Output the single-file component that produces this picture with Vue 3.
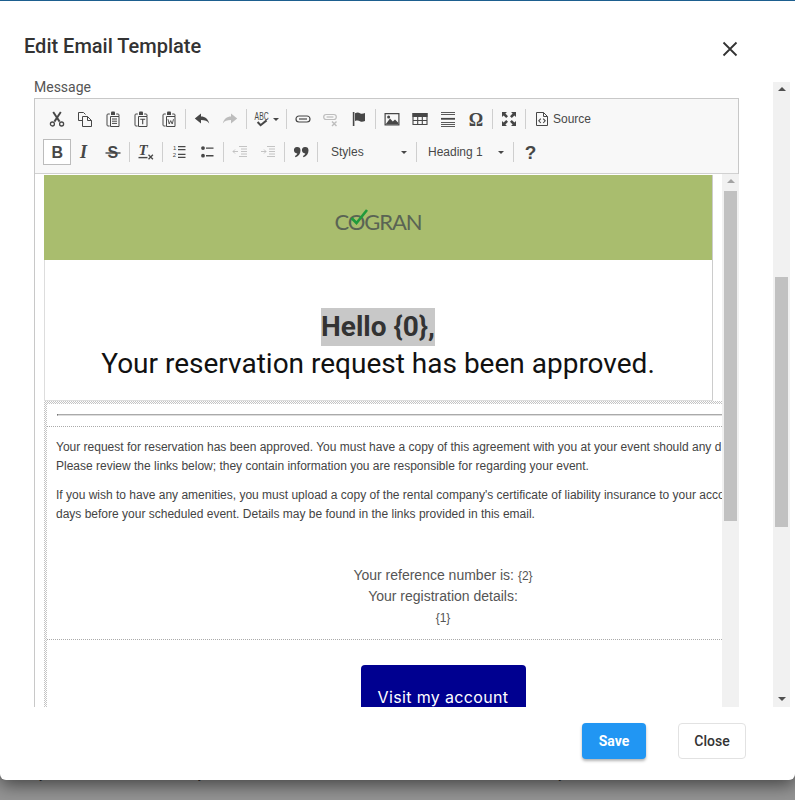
<script setup>
const F = (d) => ({ d, fill: 'currentColor', stroke: 'none', w: 0 })
const S = (d, w = 1) => ({ d, fill: 'none', stroke: 'currentColor', w })
const T = (t, x, y, size, opts = {}) => ({ t, x, y, size, ...opts })
const clip = S('M4.8 3H3a1 1 0 0 0-1 1v10a1 1 0 0 0 1 1h1.6M11.2 3H13a1 1 0 0 1 1 1v1.4', 1)
const clipTop = F('M6 1.4a1 1 0 0 1 1-1h2a1 1 0 0 1 1 1V4H6z')
const docBox = S('M5.5 5.5h8.5v10H5.5z', 1)

const row1 = [
  { k: 'cut', p: [S('M4.2 1 10.6 10.6', 1.9), S('M11.8 1 5.4 10.6', 1.9), S('M5.4 13a2 2 0 1 1-4 0 2 2 0 0 1 4 0zM14.6 13a2 2 0 1 1-4 0 2 2 0 0 1 4 0z', 1.3)] },
  { k: 'copy', p: [S('M5.5 9.5H1.5v-8h5l2 2', 1), S('M5.5 5.5h5l4 4v6h-9z', 1), S('M10.5 5.5v4h4', 1)] },
  { k: 'paste', p: [clip, clipTop, docBox, S('M7 8h5M7 10.2h5M7 12.4h5', 1)] },
  { k: 'pastetext', p: [clip, clipTop, docBox, S('M7.2 8.2h5M9.7 8.2v5', 1.1)] },
  { k: 'pasteword', p: [clip, clipTop, docBox, S('M7 8.2 8.2 13 9.7 9.6 11.2 13 12.5 8.2', 0.9)] },
  { sep: true },
  { k: 'undo', p: [F('M.8 7.6 7 2.6v3c4.2 0 7 2.6 8.2 6.8C13.4 9.8 11 9 7 9v3.4z')] },
  { k: 'redo', off: true, p: [F('M15.2 7.6 9 2.6v3C4.8 5.6 2 8.2.8 12.4 2.6 9.8 5 9 9 9v3.4z')] },
  { sep: true },
  { k: 'spell', wide: 35, caret: true, p: [T('ABC', 0.6, 8.6, 10, { family: 'Liberation Sans', len: 14 }), S('M3.6 11 6.6 14.2 12.6 9.4', 2)] },
  { sep: true },
  { k: 'link', p: [S('M6 5H4a3 3 0 0 0 0 6h8a3 3 0 0 0 0-6H5.6', 1.2), S('M4 8h8', 1.2)] },
  { k: 'unlink', off: true, p: [S('M5 3.5H3.2a2.5 2.5 0 0 0 0 5h7.6a2.5 2.5 0 0 0 0-5H5', 1.2), S('M3.6 6h6.8', 1.2), S('M9 10.5l4.5 4.5M13.5 10.5 9 15', 1.4)] },
  { k: 'flag', p: [F('M1.8 1h1.6v14H1.8z'), F('M4 2.2c2-.8 3.6-.8 5 0s3 .6 5-.2v8c-2 .8-3.6 1-5 .2s-3-.9-5-.2z')] },
  { sep: true },
  { k: 'image', p: [F('M.5 2h15v12.4H.5zM1.7 3.2v10h12.6v-10z'), F('M1.7 13.2 6 7.4l2.8 3 2.2-2 3.3 3.4v1.4z'), F('M4.6 4.4a1.5 1.5 0 1 1 0 3 1.5 1.5 0 0 1 0-3z')] },
  { k: 'table', p: [F('M.5 2h15v4H.5z'), S('M1 2.5h14v11H1zM1 9.5h14M5.7 5v8.5M10.3 5v8.5', 1.1)] },
  { k: 'hr', p: [S('M1 1.5h14M1 3.5h14', 0.9), S('M1 7.8h14', 1.8), S('M1 11.5h14M1 13.5h14M1 15.5h14', 0.9)] },
  { k: 'omega', p: [T('Ω', 0.8, 14.6, 18, { family: 'Liberation Serif', weight: 700 })] },
  { sep: true },
  { k: 'max', p: [F('M1 1h5L4.4 2.6 7 5.2 5.2 7 2.6 4.4 1 6zM15 1v5l-1.6-1.6L10.8 7 9 5.2l2.6-2.6L10 1zM1 15v-5l1.6 1.6L5.2 9 7 10.8l-2.6 2.6L6 15zM15 15h-5l1.6-1.6L9 10.8 10.8 9l2.6 2.6L15 10z')] },
  { sep: true },
  { k: 'source', wide: 69, label: 'Source', p: [S('M2.5 1.5h7l4 4v9h-11z', 1), S('M9.5 1.5v4h4', 1), S('M6.8 7.6 4.8 9.8l2 2.2M9.2 7.6l2 2.2-2 2.2', 1.1)] }
]

const row2 = [
  { k: 'bold', on: true, p: [T('B', 2.4, 14, 16, { family: 'Liberation Sans', weight: 700 })] },
  { k: 'italic', p: [T('I', 3, 14, 18, { family: 'Liberation Serif', weight: 700, style: 'italic' })] },
  { k: 'strike', p: [T('S', 2.6, 14, 16, { family: 'Liberation Sans', weight: 700 }), S('M0.5 9h15', 1.4)] },
  { sep: true },
  { k: 'clear', p: [T('T', 0.4, 11.4, 15, { family: 'Liberation Serif', weight: 700, style: 'italic' }), S('M0.5 13.6h9', 1.4), S('M10.5 10.8l4.4 4.4M14.9 10.8l-4.4 4.4', 1.3)] },
  { sep: true },
  { k: 'ol', p: [T('1', 2, 6.4, 6, { family: 'Liberation Sans' }), T('2', 1.8, 13.4, 6, { family: 'Liberation Sans' }), S('M7 2.6h7.5M7 5.6h7.5M7 10.4h7.5M7 13.4h7.5', 1.1)] },
  { k: 'ul', p: [F('M4 2.2a1.9 1.9 0 1 1 0 3.8 1.9 1.9 0 0 1 0-3.8zM4 9.8a1.9 1.9 0 1 1 0 3.8 1.9 1.9 0 0 1 0-3.8z'), S('M7 4.1h7.5M7 11.7h7.5', 1.4)] },
  { sep: true },
  { k: 'outdent', off: true, p: [S('M7 2.5h8M9 5h6M9 7.5h6M9 10h6M7 12.5h8', 0.9), S('M1 7.5h5M3 5.5l-2 2 2 2', 0.9)] },
  { k: 'indent', off: true, p: [S('M7 2.5h8M9 5h6M9 7.5h6M9 10h6M7 12.5h8', 0.9), S('M1 7.5h5M4 5.5l2 2-2 2', 0.9)] },
  { sep: true },
  { k: 'quote', p: [F('M4 3a3.4 3.4 0 0 1 3.5 3.4c0 3.4-2 5.8-5 6.9l-.6-1.3c1.4-.8 2.2-1.8 2.4-2.6A3.1 3.1 0 0 1 4 3zM12 3a3.4 3.4 0 0 1 3.5 3.4c0 3.4-2 5.8-5 6.9l-.6-1.3c1.4-.8 2.2-1.8 2.4-2.6A3.1 3.1 0 0 1 12 3z')] },
  { sep: true },
  { k: 'styles', combo: 'Styles', wide: 94, pad: 11 },
  { sep: true },
  { k: 'heading', combo: 'Heading 1', wide: 92, pad: 9 },
  { sep: true },
  { k: 'help', p: [T('?', 2.8, 14.8, 19, { family: 'Liberation Sans', weight: 700 })] }
]
const rows = [row1, row2]
</script>

<template>
  <div class="page">
    <div class="modal">
      <header class="head">
        <h2 class="title">Edit Email Template</h2>
        <svg class="close-x" width="16" height="16" viewBox="0 0 16 16" aria-hidden="true">
          <path d="M1.5 1.5 14.5 14.5M14.5 1.5 1.5 14.5" stroke="#333" stroke-width="1.8" fill="none" />
        </svg>
      </header>

      <div class="body">
        <div class="form">
          <div class="label">Message</div>
          <div class="editor">
            <div class="toolbar">
              <div v-for="(row, r) in rows" :key="r" class="tb-row">
                <template v-for="(b, i) in row" :key="i">
                  <span v-if="b.sep" class="sep"></span>
                  <span v-else-if="b.combo" class="combo" :style="{ width: b.wide + 'px', paddingLeft: b.pad + 'px' }">
                    <span>{{ b.combo }}</span><i class="caret"></i>
                  </span>
                  <span
                    v-else
                    class="btn"
                    :class="{ on: b.on, off: b.off }"
                    :style="b.wide ? { width: b.wide + 'px' } : null"
                  >
                    <svg width="16" height="16" viewBox="0 0 16 16" class="ico" aria-hidden="true">
                      <template v-for="(p, j) in b.p" :key="j">
                        <text
                          v-if="p.t"
                          :x="p.x"
                          :y="p.y"
                          :font-size="p.size"
                          :font-family="p.family"
                          :font-weight="p.weight || 400"
                          :font-style="p.style || 'normal'"
                          :textLength="p.len"
                          :lengthAdjust="p.len ? 'spacingAndGlyphs' : undefined"
                          fill="currentColor"
                        >{{ p.t }}</text>
                        <path v-else :d="p.d" :fill="p.fill" :stroke="p.stroke" :stroke-width="p.w" />
                      </template>
                    </svg>
                    <i v-if="b.caret" class="caret small"></i>
                    <span v-if="b.label" class="btn-label">{{ b.label }}</span>
                  </span>
                </template>
              </div>
            </div>

            <div class="viewport">
              <div class="frame">
                <div class="hero-table">
                  <div class="hero-band">
                    <div class="logo">
                      <span class="logo-text">COGRAN</span>
                      <svg class="logo-check" width="20" height="18" viewBox="0 0 20 18" aria-hidden="true">
                        <path d="M2.5 10 7.5 15 18 2" stroke="#1f9a3c" stroke-width="2.6" fill="none" />
                      </svg>
                    </div>
                  </div>
                  <div class="hero-text">
                    <h1 class="hero-h">
                      <span class="sel">Hello {0},</span><br />
                      <span class="hero-sub">Your reservation request has been approved.</span>
                    </h1>
                  </div>
                </div>

                <div class="sections">
                  <div class="sections-in">
                    <div class="rule-cell"><div class="rule"></div></div>
                    <div class="copy-cell">
                      <p>Your request for reservation has been approved. You must have a copy of this agreement with you at your event should any d<br />Please review the links below; they contain information you are responsible for regarding your event.</p>
                      <p>If you wish to have any amenities, you must upload a copy of the rental company's certificate of liability insurance to your account<br />days before your scheduled event. Details may be found in the links provided in this email.</p>
                      <div class="details">
                        <div class="d1">Your reference number is: <small>{2}</small></div>
                        <div class="d2">Your registration details:</div>
                        <div class="d3">{1}</div>
                      </div>
                    </div>
                    <div class="cta-cell">
                      <div class="cta">Visit my account</div>
                    </div>
                  </div>
                </div>
              </div>
              <div class="sb inner">
                <i class="arrow up"></i>
                <div class="thumb"></div>
              </div>
            </div>
          </div>
        </div>

        <div class="sb outer">
          <i class="arrow up"></i>
          <div class="thumb"></div>
          <i class="arrow down"></i>
        </div>
      </div>

      <footer class="foot">
        <button class="b-save">Save</button>
        <button class="b-close">Close</button>
      </footer>
    </div>

    <div class="under">
      <span class="y1">y</span>
      <span class="y2">y</span>
      <span class="y3">y</span>
    </div>
  </div>
</template>

<style>
html, body { margin: 0; overflow: hidden; }
</style>

<style scoped>
.page {
  width: 795px;
  height: 800px;
  overflow: hidden;
  background: #949494;
  font-family: Roboto, "Liberation Sans", sans-serif;
  position: relative;
}
.modal {
  width: 795px;
  height: 780px;
  box-sizing: border-box;
  background: #fff;
  border-top: 1px solid #1d5f8f;
  border-radius: 0 0 6px 6px;
  box-shadow: 0 5px 18px rgba(0, 0, 0, 0.55);
  display: flex;
  flex-direction: column;
  position: relative;
  z-index: 1;
}
.head {
  height: 79px;
  flex: none;
  display: flex;
  justify-content: space-between;
  padding: 31px 57px 0 24px;
  box-sizing: border-box;
}
.title {
  margin: 0;
  font-size: 20px;
  font-weight: 500;
  line-height: 28px;
  color: #333;
}
.close-x { margin-top: 9px; }
.body {
  height: 627px;
  flex: none;
  display: flex;
  overflow: hidden;
}
.form {
  width: 773px;
  flex: none;
  box-sizing: border-box;
  padding-left: 34px;
}
.label {
  font-size: 14px;
  height: 18px;
  line-height: 14px;
  color: #555;
}
.editor {
  width: 705px;
  box-sizing: border-box;
  border: 1px solid #c8c8c8;
}
.toolbar {
  height: 75px;
  box-sizing: border-box;
  background: #f8f8f8;
  border-bottom: 1px solid #d1d1d1;
  padding: 7px 0 0 8px;
}
.tb-row {
  height: 26px;
  display: flex;
  align-items: center;
  margin-bottom: 7px;
}
.btn {
  width: 28px;
  height: 26px;
  box-sizing: border-box;
  display: flex;
  align-items: center;
  justify-content: center;
  color: #474747;
  flex: none;
}
.btn.on {
  background: #fff;
  border: 1px solid #bcbcbc;
}
.btn.off { color: #bdbdbd; }
.ico { flex: none; overflow: visible; }
.btn-label {
  font: 12px/16px "Liberation Sans", sans-serif;
  color: #484848;
  margin-left: 3px;
}
.sep {
  width: 1px;
  height: 20px;
  background: #cfcfcf;
  margin: 0 2px;
  flex: none;
}
.caret {
  display: block;
  width: 0;
  height: 0;
  border: 3px solid transparent;
  border-top-color: #474747;
  border-bottom-width: 0;
  flex: none;
}
.caret.small { margin-left: 3px; }
.combo {
  height: 26px;
  flex: none;
  box-sizing: border-box;
  display: flex;
  align-items: center;
  justify-content: space-between;
  padding-right: 7px;
  font: 12px/16px "Liberation Sans", sans-serif;
  color: #484848;
}
.viewport {
  display: flex;
  height: 560px;
  background: #fff;
}
.frame {
  width: 687px;
  flex: none;
  overflow: hidden;
  padding-left: 9px;
  padding-top: 1px;
  box-sizing: border-box;
}
.hero-table {
  width: 669px;
  box-sizing: border-box;
  border-right: 1px solid #ccc;
  border-bottom: 1px solid #ddd;
  border-left: 1px solid #ddd;
}
.hero-band {
  height: 85px;
  background: #a9bd6e;
  margin-left: -1px;
  display: flex;
  align-items: center;
  justify-content: center;
}
.logo { position: relative; margin-top: 8px; }
.logo-text {
  font: 400 22px/24px Lato, sans-serif;
  letter-spacing: -1.1px;
  color: #5a6454;
  display: block;
}
.logo-check {
  position: absolute;
  left: 14px;
  top: -2px;
}
.hero-text { height: 140px; box-sizing: border-box; padding: 47px 1px 0 0; }
.hero-h {
  margin: 0;
  text-align: center;
  font-size: 28px;
  line-height: 38px;
  font-weight: 700;
  color: #333;
}
.sel { background: #c8c8c8; padding: 1.5px 0 3.5px; }
.hero-sub { font-weight: 400; color: #111; }
.sections {
  width: 760px;
  box-sizing: border-box;
  padding: 3px 0 0 3px;
  background: repeating-conic-gradient(#c4c4c4 0 25%, #fff 0 50%) 0 0 / 2px 2px;
}
.sections-in { background: #fff; }
.rule-cell {
  height: 23px;
  box-sizing: border-box;
  padding: 10px 0 0 10px;
  border-bottom: 1px dotted #aaa;
}
.rule { height: 2px; background: #aaa; border-left: 1px solid #777; border-bottom: 1px solid #ddd; box-sizing: border-box; }
.copy-cell {
  height: 213px;
  box-sizing: border-box;
  padding: 11px 0 0 9px;
  border-bottom: 1px dotted #aaa;
  font: 12px/19px "Liberation Sans", sans-serif;
  color: #444;
  white-space: nowrap;
}
.copy-cell p { margin: 0 0 10px; }
.details {
  margin: 41px 0 0 -9px;
  width: 792px;
  text-align: center;
  color: #555;
}
.d1 { font-size: 14px; line-height: 20px; }
.d2 { font-size: 14px; line-height: 21px; }
.d1 small, .d3 { font-size: 12px; }
.d3 { line-height: 21px; margin-top: 1px; }
.cta-cell {
  width: 792px;
  padding-top: 25px;
  display: flex;
  justify-content: center;
}
.cta {
  width: 165px;
  height: 60px;
  box-sizing: border-box;
  padding-top: 21px;
  border-radius: 4px;
  background: #000090;
  color: #fff;
  text-align: center;
  font: 400 16px/22px Inter, sans-serif;
  letter-spacing: 0.35px;
}
.sb {
  width: 15px;
  flex: none;
  background: #f1f1f1;
  display: flex;
  flex-direction: column;
  align-items: center;
  position: relative;
}
.sb.inner { width: 17px; }
.sb.outer { width: 17px; height: 625px; margin-top: 2px; }
.thumb { background: #c1c1c1; }
.inner .thumb { width: 13px; height: 330px; margin-top: 8px; }
.outer .thumb { width: 13px; height: 250px; margin-top: 186px; }
.arrow { width: 0; height: 0; border: 4px solid transparent; display: block; }
.arrow.up { border-bottom-color: #505050; border-top-width: 0; margin-top: 5px; }
.inner .arrow.up { border-bottom-color: #a3a3a3; margin-top: 5px; }
.arrow.down { border-top-color: #505050; border-bottom-width: 0; margin-top: auto; margin-bottom: 6px; }
.foot {
  flex: 1;
  display: flex;
  justify-content: flex-end;
  align-items: flex-start;
  gap: 32px;
  padding: 16px 49px 0 0;
}
.b-save, .b-close {
  height: 36px;
  box-sizing: border-box;
  border-radius: 4px;
  font: 500 14px/20px Roboto, sans-serif;
  padding: 0;
}
.b-save {
  width: 64px;
  background: #2196f3;
  color: #fff;
  border: 0;
  font-weight: 700;
  box-shadow: 0 2px 3px rgba(0, 0, 0, 0.3);
}
.b-close {
  width: 68px;
  background: #fff;
  color: #333;
  border: 1px solid #e2e2e2;
}
.under {
  height: 20px;
  margin-top: -14px;
  font: 14px/14px Roboto, sans-serif;
  color: #333;
  display: flex;
}
.y1 { margin-left: 39px; }
.y2 { margin-left: 152px; }
.y3 { margin-left: 354px; }
</style>
